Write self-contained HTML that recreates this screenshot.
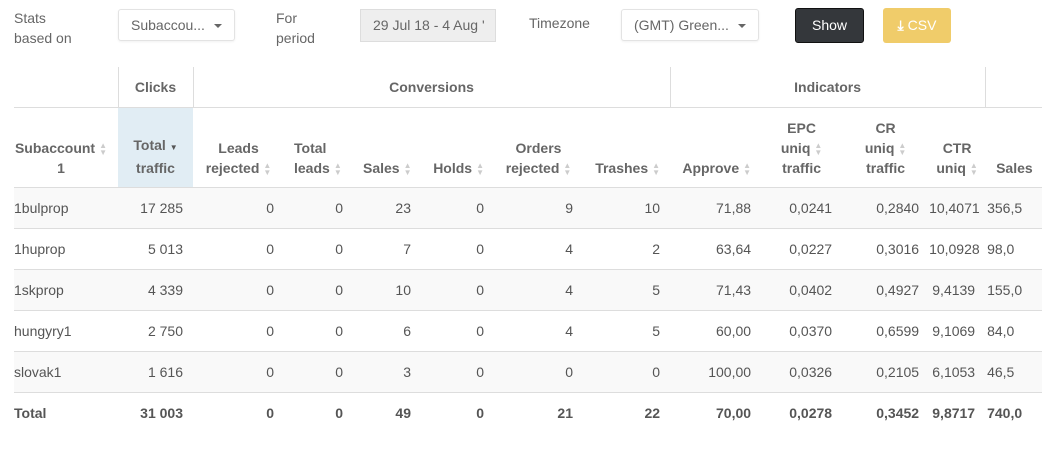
<!DOCTYPE html><html><head><style>
body{margin:0;width:1042px;height:466px;overflow:hidden;background:#fff;font-family:"Liberation Sans",sans-serif;color:#555;font-size:14px;position:relative}
.a{position:absolute}
.sel{position:absolute;top:9px;height:32px;border:1px solid #e3e3e3;border-radius:3px;background:#fff;box-shadow:0 1px 2px rgba(0,0,0,.06);box-sizing:border-box;line-height:30px;padding-left:12px;color:#666}
.car{position:absolute;right:12px;top:14px;border-left:4px solid transparent;border-right:4px solid transparent;border-top:4px solid #666}
table{position:absolute;left:14px;top:67px;border-collapse:collapse;table-layout:fixed;width:1080px}
td,th{padding:0 10px;box-sizing:border-box;white-space:nowrap}
th{font-weight:bold;color:#666;vertical-align:bottom;line-height:20px}
.g th{height:40px;vertical-align:middle;text-align:center;border-bottom:1px solid #ddd}
.h th{height:80px;padding-bottom:9px;border-bottom:1px solid #ddd;text-align:right}
td{height:41px;text-align:right;border-bottom:1px solid #ddd}
tbody tr:nth-child(odd){background:#f9f9f9}
td:first-child,th:first-child{text-align:left;padding-left:0}
td:nth-child(12){padding-left:0}
td:nth-child(13){text-align:left;padding-left:2px}
.s{display:inline-block;color:#ccc;font-size:8px;vertical-align:middle;margin-left:4px;line-height:7px}
tr.t td{font-weight:bold;border-bottom:none;background:#fff}
</style></head><body>
<div class="a" style="left:14px;top:8px;line-height:20px;color:#666">Stats<br>based on</div>
<div class="sel" style="left:118px;width:117px">Subaccou...<span class="car"></span></div>
<div class="a" style="left:276px;top:8px;line-height:20px;color:#666">For<br>period</div>
<div class="a" style="left:360px;top:9px;width:136px;height:33px;background:#eee;border:1px solid #ddd;box-sizing:border-box;line-height:31px;padding-left:12px;color:#666;overflow:hidden;white-space:nowrap">29 Jul 18 - 4 Aug '</div>
<div class="a" style="left:529px;top:15px;color:#666">Timezone</div>
<div class="sel" style="left:621px;width:138px">(GMT) Green...<span class="car"></span></div>
<div class="a" style="left:795px;top:8px;width:69px;height:35px;background:#34373b;border:1px solid #111;border-radius:3px;box-sizing:border-box;color:#fff;text-align:center;line-height:33px">Show</div>
<div class="a" style="left:883px;top:8px;width:68px;height:35px;background:#f0cc6a;border-radius:3px;color:#fff;text-align:center;line-height:35px"><b>&#x2913;</b> CSV</div>
<table>
<colgroup><col style="width:104px"><col style="width:75px"><col style="width:91px"><col style="width:69px"><col style="width:68px"><col style="width:73px"><col style="width:89px"><col style="width:87px"><col style="width:91px"><col style="width:81px"><col style="width:87px"><col style="width:56px"><col style="width:109px"></colgroup>
<thead>
<tr class="g"><th style="border-bottom:1px solid #ddd"></th><th style="border-left:1px solid #ddd;border-right:1px solid #ddd">Clicks</th><th colspan="6" style="border-right:1px solid #ddd">Conversions</th><th colspan="4" style="border-right:1px solid #ddd">Indicators</th><th></th></tr>
<tr class="h"><th style="text-align:center">Subaccount<span class="s">&#9650;<br>&#9660;</span><br>1</th><th style="background:#e1edf4;text-align:center">Total <span style="font-size:8px;color:#555">&#9660;</span><br>traffic</th><th style="text-align:center">Leads<br>rejected<span class="s">▲<br>▼</span></th><th style="text-align:left">Total<br>leads<span class="s">▲<br>▼</span></th><th>Sales<span class="s">▲<br>▼</span></th><th>Holds<span class="s">▲<br>▼</span></th><th style="text-align:center">Orders<br>rejected<span class="s">▲<br>▼</span></th><th>Trashes<span class="s">▲<br>▼</span></th><th>Approve<span class="s">▲<br>▼</span></th><th style="text-align:center">EPC<br>uniq<span class="s">▲<br>▼</span><br>traffic</th><th style="text-align:center">CR<br>uniq<span class="s">▲<br>▼</span><br>traffic</th><th style="text-align:center;padding:0 0 9px 0">CTR<br>uniq<span class="s">▲<br>▼</span></th><th style="text-align:left;padding-left:11px">Sales</th></tr>
</thead><tbody>
<tr><td>1bulprop</td><td>17 285</td><td>0</td><td>0</td><td>23</td><td>0</td><td>9</td><td>10</td><td>71,88</td><td>0,0241</td><td>0,2840</td><td>10,4071</td><td>356,5</td></tr>
<tr><td>1huprop</td><td>5 013</td><td>0</td><td>0</td><td>7</td><td>0</td><td>4</td><td>2</td><td>63,64</td><td>0,0227</td><td>0,3016</td><td>10,0928</td><td>98,0</td></tr>
<tr><td>1skprop</td><td>4 339</td><td>0</td><td>0</td><td>10</td><td>0</td><td>4</td><td>5</td><td>71,43</td><td>0,0402</td><td>0,4927</td><td>9,4139</td><td>155,0</td></tr>
<tr><td>hungyry1</td><td>2 750</td><td>0</td><td>0</td><td>6</td><td>0</td><td>4</td><td>5</td><td>60,00</td><td>0,0370</td><td>0,6599</td><td>9,1069</td><td>84,0</td></tr>
<tr><td>slovak1</td><td>1 616</td><td>0</td><td>0</td><td>3</td><td>0</td><td>0</td><td>0</td><td>100,00</td><td>0,0326</td><td>0,2105</td><td>6,1053</td><td>46,5</td></tr>
<tr class="t"><td>Total</td><td>31 003</td><td>0</td><td>0</td><td>49</td><td>0</td><td>21</td><td>22</td><td>70,00</td><td>0,0278</td><td>0,3452</td><td>9,8717</td><td>740,0</td></tr>
</tbody></table>
</body></html>
